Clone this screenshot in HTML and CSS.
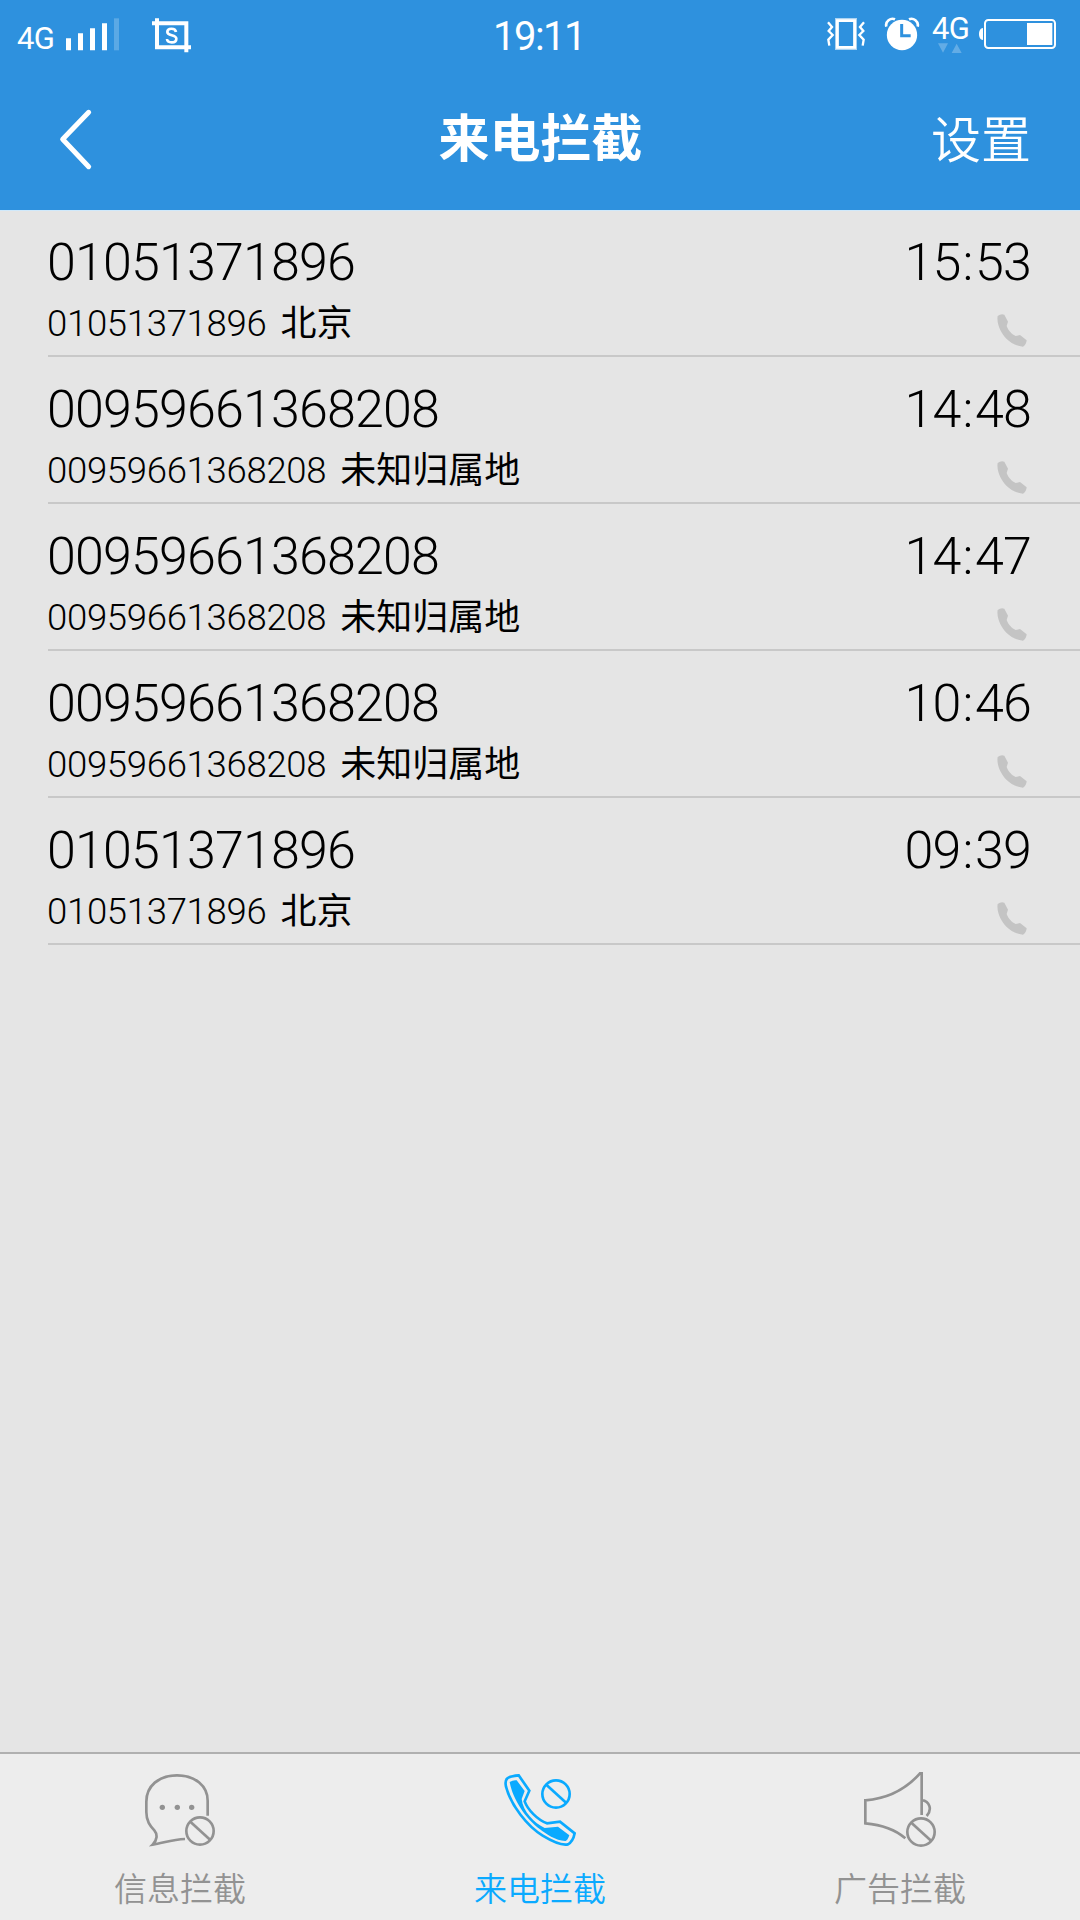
FILE: index.html
```html
<!DOCTYPE html>
<html lang="zh-CN">
<head>
<meta charset="utf-8">
<title>来电拦截</title>
<link rel="stylesheet" href="styles.css">
</head>
<body>
<div class="screen">
  <header class="header">
    <div class="status">
      <div class="status-left">
        <span class="net">4G</span>
        <svg class="signal" viewBox="195 50 165 105"><g fill="#fff"><path d="M198 114h15v36h-15zM234 99h15v51h-15zM270 84h15v66h-15zM306 69h15v81h-15z"/><path d="M342 54h15v96h-15z" opacity=".22"/></g></svg>
        <svg class="shot" viewBox="453 50 123 111"><g fill="none" stroke="#fff" stroke-width="12"><path d="M456 69H559V156M471 54V141H573"/><path d="M528 95C526 82 502 82 502 95C502 108 529 101 529 115C529 130 502 129 501 116" stroke-width="8"/></g></svg>
      </div>
      <div class="clock">19:11</div>
      <div class="status-right">
        <svg class="vibrate" viewBox="78 48 120 108"><g fill="none" stroke="#fff"><path d="M111 60h54v84h-54z" stroke-width="12" opacity=".6"/><path d="M112 62h52v80h-52z" stroke-width="8"/><path d="M84 67L96 81 86 93 98 105 85 119 88 137M192 67L180 81 190 93 178 105 191 119 188 137" stroke-width="7"/></g></svg>
        <svg class="alarm" viewBox="252 48 108 108"><circle cx="306" cy="105" r="45.500" fill="#fff"/><path d="M305 72V107H332" fill="none" stroke="#2e91de" stroke-width="9"/><path d="M259 80C255 64 272 52 285 58M353 80C357 64 340 52 327 58" fill="none" stroke="#fff" stroke-width="8"/></svg>
        <div class="data">
          <span class="net">4G</span>
          <svg class="arrows" viewBox="399 126 108 36"><path d="M417 130h30l-15 28zM458 159h30l-15-28z" fill="#fff" opacity=".25"/></svg>
        </div>
        <svg class="battery" viewBox="534 51 237 102"><path d="M549 84v36c-16 0-16-36 0-36z" fill="#fff"/><rect x="555" y="60" width="210" height="84" rx="10" fill="none" stroke="#fff" stroke-width="6"/><path d="M681 69h76v66h-76z" fill="#fff"/></svg>
      </div>
    </div>
    <div class="titlebar">
      <svg class="back" viewBox="174 324 105 189"><path d="M266 337L188 418 266 500" fill="none" stroke="#fff" stroke-width="15" stroke-linecap="round" stroke-linejoin="round"/></svg>
      <h1 class="title">来电拦截</h1>
      <span class="settings">设置</span>
    </div>
  </header>

  <svg class="defs" width="0" height="0">
    <symbol id="call" viewBox="408 310 96 105"><path d="M413 319Q422 312 433 315L444 336 440 349C444 362 457 375 467 379L480 376 500 392Q499 405 489 411C470 409 452 400 440 388C423 371 409 343 413 319Z"/></symbol>
    <symbol id="ban" viewBox="0 0 96 96"><circle cx="48" cy="48" r="41"/><path d="M19 20L79 75"/></symbol>
  </svg>

  <main class="list">
    <div class="row"><div class="info"><div class="number">01051371896</div><div class="detail">01051371896 <span class="place">北京</span></div></div><div class="meta"><div class="time">15<span class="colon">:</span>53</div><svg class="call"><use href="#call"/></svg></div></div>
    <div class="row"><div class="info"><div class="number">00959661368208</div><div class="detail">00959661368208 <span class="place">未知归属地</span></div></div><div class="meta"><div class="time">14<span class="colon">:</span>48</div><svg class="call"><use href="#call"/></svg></div></div>
    <div class="row"><div class="info"><div class="number">00959661368208</div><div class="detail">00959661368208 <span class="place">未知归属地</span></div></div><div class="meta"><div class="time">14<span class="colon">:</span>47</div><svg class="call"><use href="#call"/></svg></div></div>
    <div class="row"><div class="info"><div class="number">00959661368208</div><div class="detail">00959661368208 <span class="place">未知归属地</span></div></div><div class="meta"><div class="time">10<span class="colon">:</span>46</div><svg class="call"><use href="#call"/></svg></div></div>
    <div class="row"><div class="info"><div class="number">01051371896</div><div class="detail">01051371896 <span class="place">北京</span></div></div><div class="meta"><div class="time">09<span class="colon">:</span>39</div><svg class="call"><use href="#call"/></svg></div></div>
  </main>

  <nav class="tabs">
    <div class="tab">
      <svg class="tab-icon" viewBox="150 90 240 240"><path d="M353 227V182C353 138 316 106 261 106C206 106 169 138 169 185V216C169 243 180 257 193 271C203 283 202 300 188 314C220 309 248 298 285 297"/><g class="solid"><circle cx="217" cy="202" r="8"/><circle cx="262" cy="202" r="8"/><circle cx="305" cy="202" r="8"/></g><use href="#ban" x="282" y="225" width="96" height="96"/></svg>
      <span>信息拦截</span>
    </div>
    <div class="tab active">
      <svg class="tab-icon" viewBox="150 90 240 240"><path d="M206 106L238 152 224 184C233 209 262 239 291 250L330 245 374 280C371 295 365 307 354 313C337 317 306 304 278 287C231 258 183 196 168 140C163 117 170 109 206 106Z"/><path class="solid" d="M179 126Q190 119 200 121L224 153 215 177C219 215 253 249 284 264L324 260 358 286Q353 301 347 303C320 304 286 281 270 268C228 237 188 178 179 126Z"/><use href="#ban" x="270" y="114" width="96" height="96"/></svg>
      <span>来电拦截</span>
    </div>
    <div class="tab">
      <svg class="tab-icon" viewBox="150 90 240 240"><path d="M335 225V100H330C285 151 229 176 166 181V250C215 254 253 266 286 295M335 180C360 184 367 209 350 228"/><use href="#ban" x="285" y="228" width="96" height="96"/></svg>
      <span>广告拦截</span>
    </div>
  </nav>
</div>
</body>
</html>
```
FILE: styles.css
```css
* { box-sizing: border-box; margin: 0; padding: 0; }
body {
  width: 1080px;
  height: 1920px;
  overflow: hidden;
  font-family: Roboto, "Noto Sans CJK SC", sans-serif;
  background: #e5e5e5;
}
svg { display: block; flex: none; }
.defs { position: absolute; }
.screen { display: flex; flex-direction: column; height: 1920px; }

.header { height: 211px; background: #2e91de; border-bottom: 1px solid #d0e9fb; color: #fff; flex: none; }
.status { display: grid; grid-template-columns: 1fr 120px 1fr; height: 72px; }
.status-left { display: flex; padding-left: 17px; }
.net { font-size: 31px; line-height: 36px; letter-spacing: -.7px; width: 38px; }
.status-left .net { margin-top: 21px; }
.signal { width: 55px; height: 35px; margin: 16.7px 0 0 10px; }
.shot { width: 41px; height: 37px; margin: 16.7px 0 0 31px; }
.clock { font-size: 40px; line-height: 46px; letter-spacing: -1.500px; text-align: center; padding: 14px 2px 0 0; }
.status-right { display: flex; justify-content: flex-end; padding-right: 23px; }
.vibrate { width: 40px; height: 36px; margin: 16px 18px 0 0; }
.alarm { width: 36px; height: 36px; margin: 16px 12px 0 0; }
.data { display: flex; flex-direction: column; margin: 10px 8px 0 0; }
.data .net { height: 32px; padding-top: 1px; }
.arrows { width: 36px; height: 12px; }
.battery { width: 79px; height: 34px; margin-top: 17px; }

.titlebar { display: grid; grid-template-columns: 1fr 240px 1fr; align-items: center; height: 138px; padding: 0 49px 0 58px; }
.back { width: 35px; height: 63px; margin-top: -3px; }
.title { font-size: 51px; font-weight: 700; line-height: 70px; text-align: center; white-space: nowrap; margin: -2px 0 0 -8px; }
.settings { font-size: 50px; font-weight: 350; line-height: 70px; text-align: right; margin-top: 0; }

.list { flex: 1; margin-top: -1px; }
.row { display: flex; justify-content: space-between; height: 147px; margin-left: 48px; border-bottom: 2px solid #c8c8c8; padding-right: 49px; color: #000; }
.number, .time { font-size: 52px; line-height: 60px; font-weight: 300; letter-spacing: -.85px; padding-top: 23px; }
.number { margin-left: -1px; }
.colon { margin: 0 2.5px 0 2px; }
.detail { display: flex; align-items: baseline; font-size: 36.500px; line-height: 44px; font-weight: 300; letter-spacing: -.3px; margin: 9px 0 0 -1px; }
.place { font-size: 36px; letter-spacing: 0; margin-left: 14px; font-weight: 400; }
.meta { display: flex; flex-direction: column; align-items: flex-end; }
.call { width: 32px; height: 35px; margin: 20px 3px 0 0; fill: #c4c4c4; }

.tabs { display: grid; grid-template-columns: repeat(3, 1fr); height: 168px; border-top: 2px solid #b0b0b0; background: #ededed; flex: none; }
.tab { display: flex; flex-direction: column; align-items: center; padding-top: 16px; color: #929292; font-size: 33px; line-height: 46px; font-weight: 350; }
.tab span { margin-top: 17px; }
.tab.active { color: #0aaaff; }
.tab-icon { width: 80px; height: 80px; fill: none; stroke: currentColor; stroke-width: 8; }
.solid { fill: currentColor; stroke: none; }
```
